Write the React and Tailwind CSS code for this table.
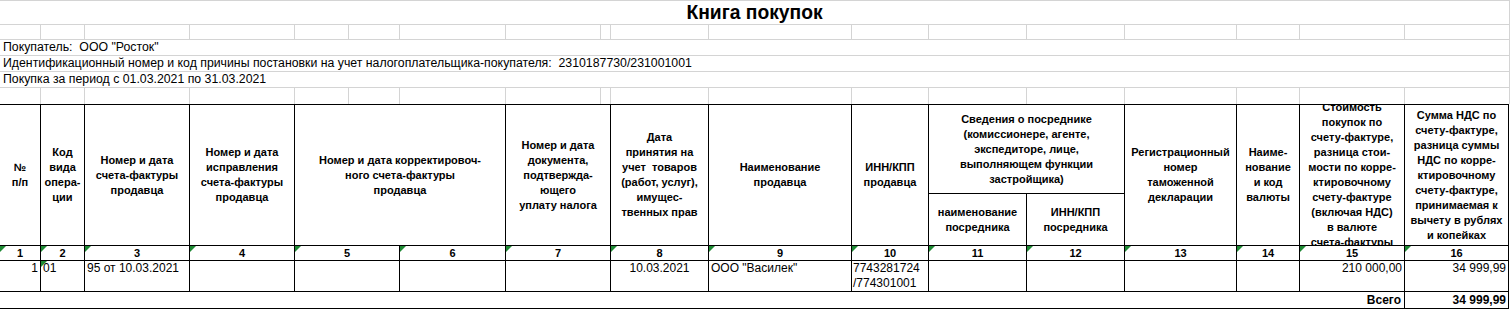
import React from "react";

const font = "font-['Liberation_Sans',Arial,sans-serif]";

// excel columns: widths include the 1px right gridline
const sheetCols = [41, 44, 105, 105, 54, 51, 106, 95, 10, 98, 143, 77, 98, 98, 112, 63, 105, 105];

function Flag() {
    return (
        <svg className="absolute left-0 top-0" width="6" height="6" viewBox="0 0 6 6">
            <polygon points="0,0 6,0 0,6" fill="#1e8a34" />
        </svg>
    );
}

function GrayRow({ last }) {
    return sheetCols.map((_, index) => (
        <div
            key={index}
            className={`border-r border-[#d4d4d4] ${last ? "" : "border-b"}`}
        />
    ));
}

function TextRow({ children }) {
    return (
        <div className="col-span-18 flex items-center border-b border-r border-[#d4d4d4] pl-[3px] text-[12.3px] leading-[15px] text-black">
            {children}
        </div>
    );
}

function Head({ className = "", children }) {
    return (
        <div
            className={`flex items-center justify-center overflow-hidden border-b border-r border-black text-center text-[11px] font-bold leading-[15px] text-black ${className}`}
        >
            <div>{children}</div>
        </div>
    );
}

const lines = (arr) =>
    arr.map((line, index) => (
        <React.Fragment key={index}>
            {index > 0 ? <br /> : null}
            {line}
        </React.Fragment>
    ));

const numberSpans = ["", "", "", "", "col-span-2", "", "col-span-2", "", "", "", "", "", "", "", "", "mr-px"];

export default function App() {
    return (
        <div className={`${font} w-[1510px] overflow-hidden bg-white`}>
            <div className="grid grid-cols-[41px_44px_105px_105px_54px_51px_106px_95px_10px_98px_143px_77px_98px_98px_112px_63px_105px_105px] grid-rows-[1px_24px_15px_16px_16px_16px_16px_90px_52px_15px_31px_17px]">
                <div className="col-span-18 bg-[#d4d4d4]" />

                <div className="col-span-18 flex items-center justify-center border-b border-r border-[#d4d4d4] text-[19.3px] font-bold leading-none text-black">
                    Книга покупок
                </div>

                <GrayRow />

                <TextRow>Покупатель:&nbsp; ООО "Росток"</TextRow>
                <TextRow>
                    Идентификационный номер и код причины постановки на учет налогоплательщика-покупателя:&nbsp; 2310187730/231001001
                </TextRow>
                <TextRow>Покупка за период с 01.03.2021 по 31.03.2021</TextRow>

                <GrayRow last />

                {/* table header */}
                <Head className="row-span-2 border-t">{lines(["№", "п/п"])}</Head>
                <Head className="row-span-2 border-t">{lines(["Код", "вида", "опера-", "ции"])}</Head>
                <Head className="row-span-2 border-t">{lines(["Номер и дата", "счета-фактуры", "продавца"])}</Head>
                <Head className="row-span-2 border-t">
                    {lines(["Номер и дата", "исправления", "счета-фактуры", "продавца"])}
                </Head>
                <Head className="col-span-3 row-span-2 border-t">
                    {lines(["Номер и дата корректировоч-", "ного счета-фактуры", "продавца"])}
                </Head>
                <Head className="col-span-2 row-span-2 border-t">
                    {lines(["Номер и дата", "документа,", "подтвержда-", "ющего", "уплату налога"])}
                </Head>
                <Head className="row-span-2 border-t">
                    {lines(["Дата", "принятия на", "учет\u00a0 товаров", "(работ, услуг),", "имущес-", "твенных прав"])}
                </Head>
                <Head className="row-span-2 border-t">{lines(["Наименование", "продавца"])}</Head>
                <Head className="row-span-2 border-t">{lines(["ИНН/КПП", "продавца"])}</Head>
                <Head className="col-span-2 border-t">
                    {lines([
                        "Сведения о посреднике",
                        "(комиссионере, агенте,",
                        "экспедиторе, лице,",
                        "выполняющем функции",
                        "застройщика)",
                    ])}
                </Head>
                <Head className="row-span-2 border-t">
                    {lines(["Регистрационный", "номер", "таможенной", "декларации"])}
                </Head>
                <Head className="row-span-2 border-t">{lines(["Наиме-", "нование", "и код", "валюты"])}</Head>
                <Head className="row-span-2 border-t">
                    {lines([
                        "Стоимость",
                        "покупок по",
                        "счету-фактуре,",
                        "разница стои-",
                        "мости по корре-",
                        "ктировочному",
                        "счету-фактуре",
                        "(включая НДС)",
                        "в валюте",
                        "счета-фактуры",
                    ])}
                </Head>
                <Head className="row-span-2 mr-px border-t">
                    {lines([
                        "Сумма НДС по",
                        "счету-фактуре,",
                        "разница суммы",
                        "НДС по корре-",
                        "ктировочному",
                        "счету-фактуре,",
                        "принимаемая к",
                        "вычету в рублях",
                        "и копейках",
                    ])}
                </Head>
                <Head>{lines(["наименование", "посредника"])}</Head>
                <Head>{lines(["ИНН/КПП", "посредника"])}</Head>

                {/* column numbers */}
                {numberSpans.map((span, index) => (
                    <div
                        key={index}
                        className={`relative flex items-center justify-center border-b border-r border-black text-[11px] font-bold leading-none text-black ${span}`}
                    >
                        <Flag />
                        {index + 1}
                    </div>
                ))}

                {/* data row */}
                <div className="border-b border-r border-black pr-[2px] text-right text-[12px] leading-[15px]">1</div>
                <div className="relative border-b border-r border-black pl-[2px] text-[12px] leading-[15px]">
                    <Flag />
                    01
                </div>
                <div className="border-b border-r border-black pl-[2px] text-[12px] leading-[15px]">95 от 10.03.2021</div>
                <div className="border-b border-r border-black" />
                <div className="col-span-2 border-b border-r border-black" />
                <div className="border-b border-r border-black" />
                <div className="col-span-2 border-b border-r border-black" />
                <div className="border-b border-r border-black text-center text-[12px] leading-[15px]">10.03.2021</div>
                <div className="border-b border-r border-black pl-[2px] text-[12px] leading-[15px]">ООО "Василек"</div>
                <div className="border-b border-r border-black pl-px text-[12px] leading-[15px]">
                    7743281724
                    <br />
                    /774301001
                </div>
                <div className="border-b border-r border-black" />
                <div className="border-b border-r border-black" />
                <div className="border-b border-r border-black" />
                <div className="border-b border-r border-black" />
                <div className="border-b border-r border-black pr-[2px] text-right text-[12px] leading-[15px]">210 000,00</div>
                <div className="mr-px border-b border-r border-black pr-[2px] text-right text-[12px] leading-[15px]">34 999,99</div>

                {/* total */}
                <div className="col-span-17 flex items-center justify-end border-b border-r border-black pr-[3px] text-[12px] font-bold leading-none">
                    Всего
                </div>
                <div className="mr-px flex items-center justify-end border-b border-r border-black pr-[2px] text-[12px] font-bold leading-none">
                    34 999,99
                </div>
            </div>
        </div>
    );
}
